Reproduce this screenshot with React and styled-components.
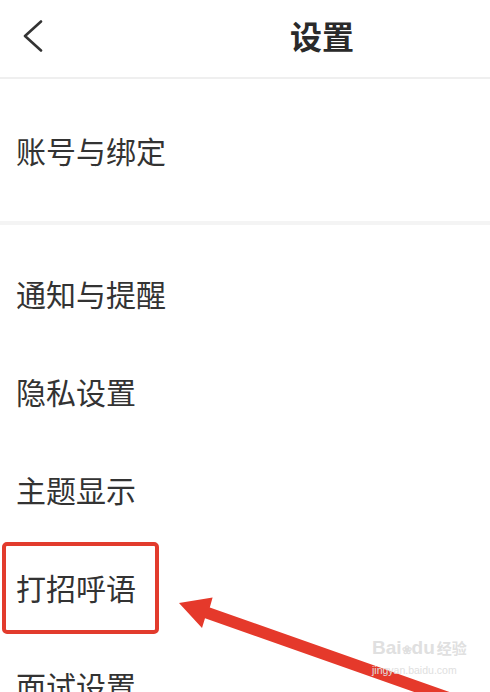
import React from 'react'
import styled, {createGlobalStyle} from 'styled-components'

const Global = createGlobalStyle`
    html, body {
        margin: 0;
        padding: 0;
        background: #fff;
        overflow: hidden;
    }
    body {
        font-family: "Noto Sans CJK SC", "Noto Sans", sans-serif;
        color: #333;
    }
`;

const items = ['通知与提醒', '隐私设置', '主题显示', '打招呼语', '面试设置']

const App = () => {
    return (
        <Page>
            <Global />
            <Header>
                <Back aria-label="返回">
                    <svg width="20" height="32" viewBox="0 0 20 32">
                        <polyline points="18,1.5 2,16 18,30.5" fill="none" stroke="#333" strokeWidth="2.6" strokeLinecap="round" strokeLinejoin="round" />
                    </svg>
                </Back>
                <Title>设置</Title>
            </Header>
            <TopGroup>
                <Row>账号与绑定</Row>
            </TopGroup>
            <Divider />
            <List>
                {items.map(name => (
                    <Row key={name}>
                        {name}
                        {name === '打招呼语' && <Highlight />}
                    </Row>
                ))}
            </List>
            <Arrow width="490" height="692" viewBox="0 0 490 692">
                <polygon
                    fill="#e5392b"
                    points="179,603 212.6,597.6 209.8,607.5 492,707 488,718 205,618.3 202,628"
                />
            </Arrow>
            <Watermark>
                <Brand>Bai<Paw>❀</Paw>du<Cn>经验</Cn></Brand>
                <Site>jingyan.baidu.com</Site>
            </Watermark>
        </Page>
    )
}

const Page = styled.div`
    position: relative;
    width: 490px;
    height: 692px;
    overflow: hidden;
`;
const Header = styled.div`
    height: 77px;
    display: flex;
    align-items: center;
    padding: 0 0 0 23px;
    border-bottom: 2px solid #efefef;
`;
const Back = styled.div`
    width: 20px;
    height: 32px;
    display: flex;
    margin-top: -6px;
`;
const Title = styled.div`
    margin-left: 247px;
    margin-top: -8px;
    font-size: 32px;
    font-weight: 700;
    color: #2a2a2a;
`;
const TopGroup = styled.div`
    height: 142px;
    display: flex;
    align-items: center;
`;
const Divider = styled.div`
    height: 4px;
    background: #f4f4f4;
`;
const List = styled.div`
    padding-top: 19px;
`;
const Row = styled.div`
    position: relative;
    height: 98px;
    display: flex;
    align-items: center;
    padding-left: 16px;
    font-size: 30px;
    line-height: 1;
    color: #333;
`;
const Highlight = styled.div`
    position: absolute;
    left: 2px;
    top: 4px;
    width: 149px;
    height: 84px;
    border: 4px solid #e23b2d;
    border-radius: 5px;
`;
const Arrow = styled.svg`
    position: absolute;
    left: 0;
    top: 0;
    pointer-events: none;
`;
const Watermark = styled.div`
    position: absolute;
    left: 372px;
    top: 638px;
    width: 90px;
    display: flex;
    flex-direction: column;
    align-items: flex-start;
    color: #e0e0e0;
    font-family: "Liberation Sans", Arial, sans-serif;
`;
const Brand = styled.div`
    font-size: 19px;
    font-weight: 700;
    line-height: 1;
    white-space: nowrap;
`;
const Paw = styled.span`
    font-size: 12px;
`;
const Cn = styled.span`
    font-family: "Noto Sans CJK SC", sans-serif;
    font-size: 15px;
    margin-left: 2px;
`;
const Site = styled.div`
    font-size: 10.5px;
    margin-top: 7px;
    white-space: nowrap;
`;

export default App
